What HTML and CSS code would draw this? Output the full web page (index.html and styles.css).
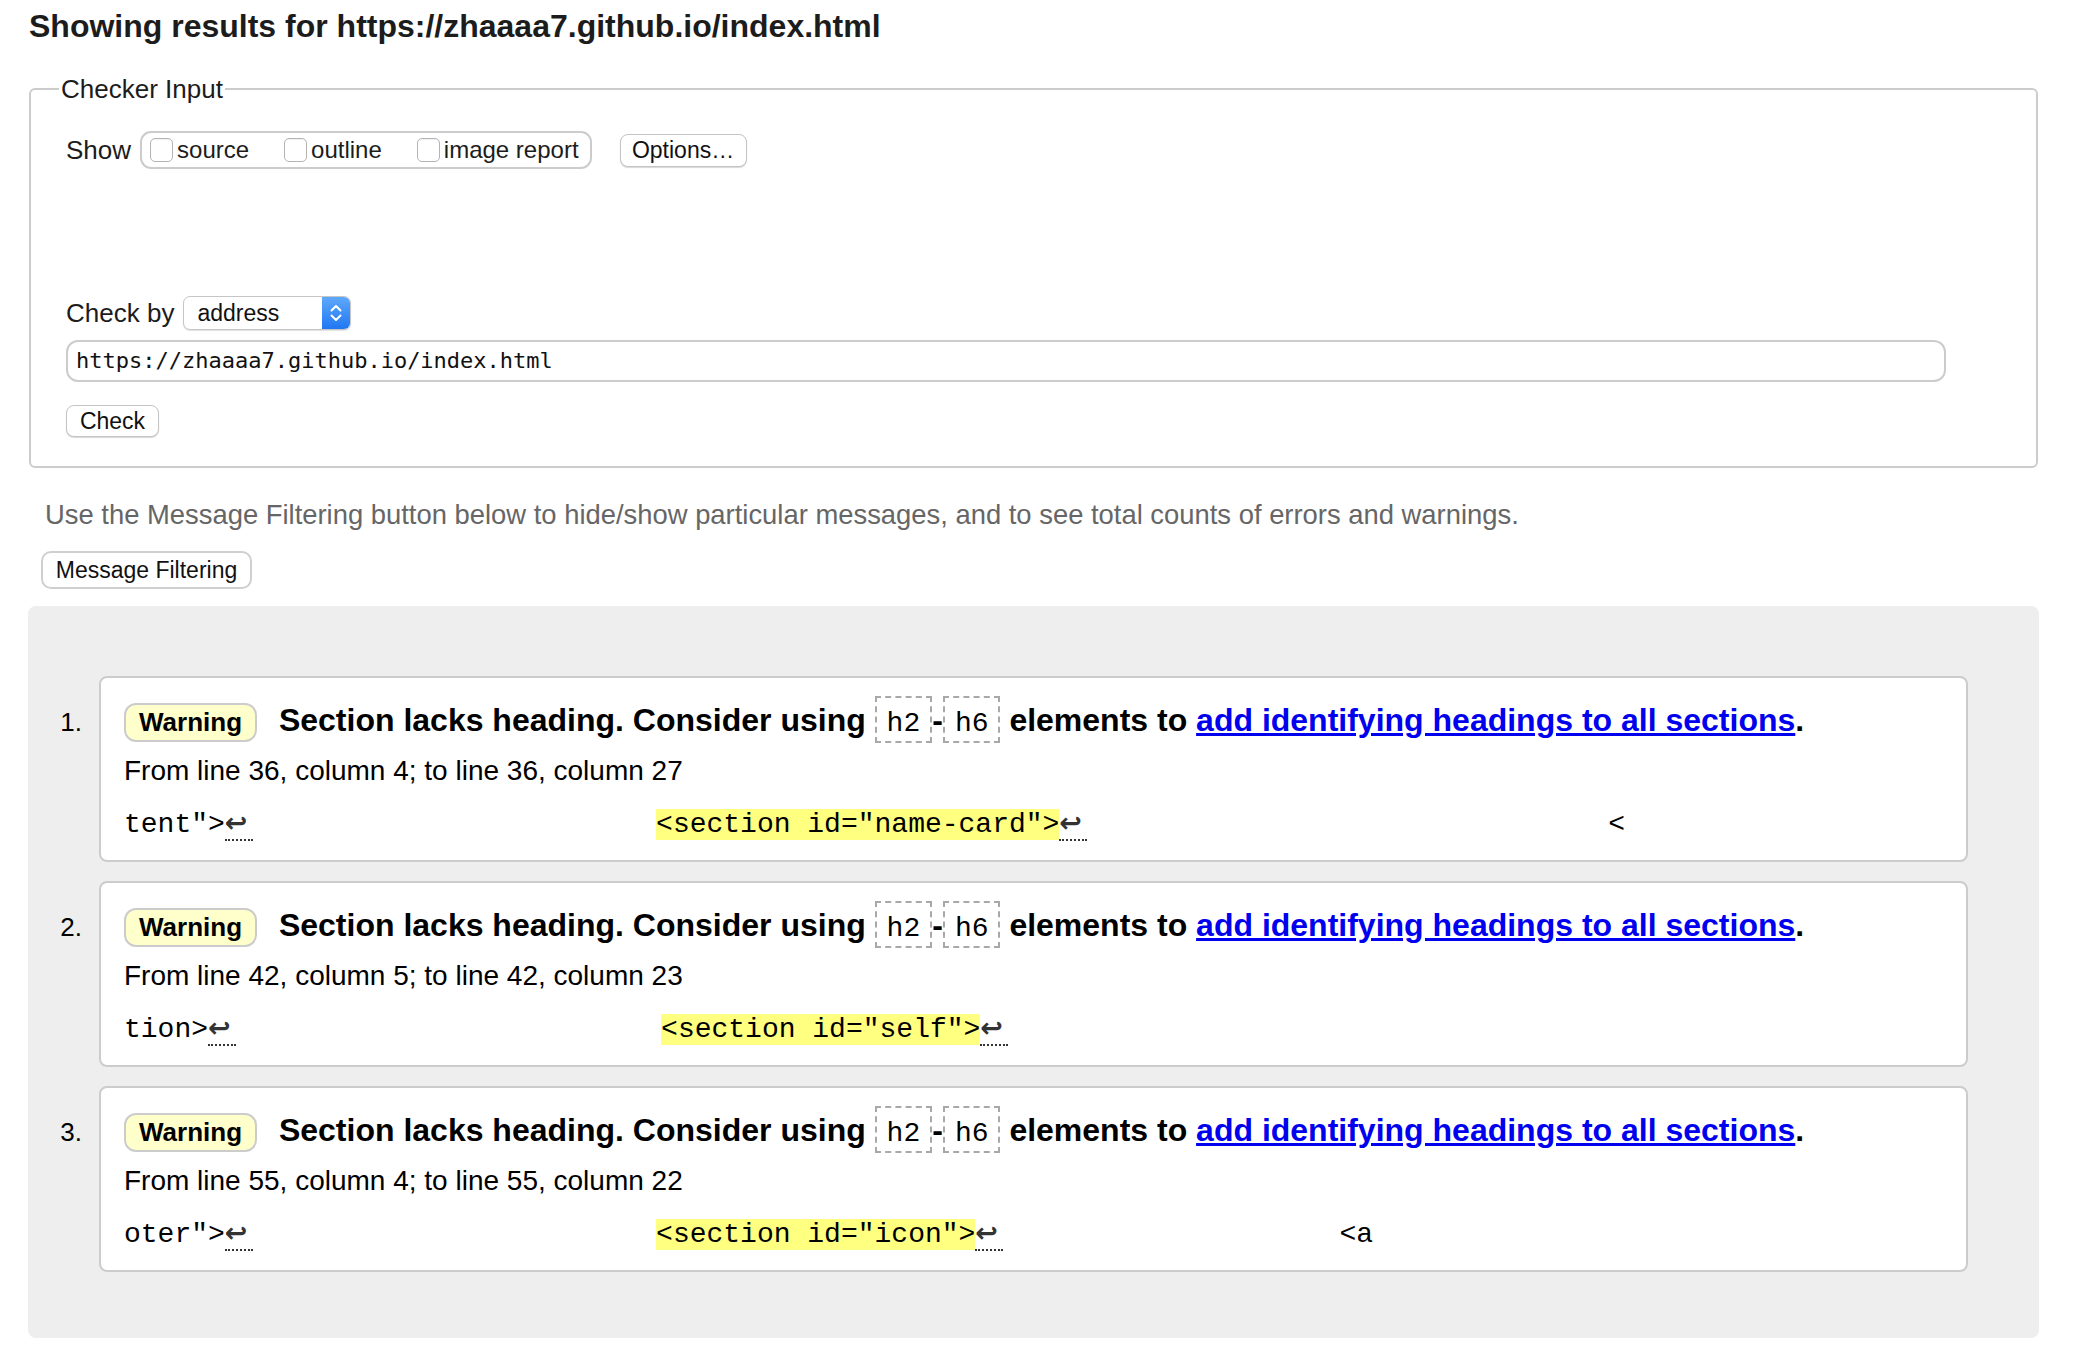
FILE: index.html
```html
<!DOCTYPE html>
<html lang="en">
<head>
<meta charset="utf-8">
<title>Showing results for https://zhaaaa7.github.io/index.html</title>
<link rel="stylesheet" href="styles.css">
</head>
<body>
<h2 class="title">Showing results for https://zhaaaa7.github.io/index.html</h2>

<fieldset class="checker">
  <legend>Checker Input</legend>
  <div class="show-row">
    <span class="label">Show</span>
    <div class="show-group">
      <label class="opt"><input type="checkbox"><span>source</span></label>
      <label class="opt"><input type="checkbox"><span>outline</span></label>
      <label class="opt"><input type="checkbox"><span>image report</span></label>
    </div>
    <button class="btn btn-options" type="button">Options…</button>
  </div>
  <div class="by-row">
    <span class="label">Check by</span>
    <div class="select">
      <span class="select-text">address</span>
      <span class="select-arrows"><svg width="28" height="34" viewBox="0 0 28 34"><path d="M9.5 14.5 L14 10 L18.5 14.5" fill="none" stroke="#fff" stroke-width="2" stroke-linecap="round" stroke-linejoin="round"/><path d="M9.5 19.5 L14 24 L18.5 19.5" fill="none" stroke="#fff" stroke-width="2" stroke-linecap="round" stroke-linejoin="round"/></svg></span>
    </div>
  </div>
  <div class="url">https://zhaaaa7.github.io/index.html</div>
  <button class="btn btn-check" type="button">Check</button>
</fieldset>

<p class="hint">Use the Message Filtering button below to hide/show particular messages, and to see total counts of errors and warnings.</p>
<button class="btn btn-filter" type="button">Message Filtering</button>

<ol class="results">
  <li class="msg">
    <span class="num">1.</span>
    <div class="box">
      <p class="head"><strong class="badge">Warning</strong> Section lacks heading. Consider using <code class="el">h2</code>-<code class="el">h6</code> elements to <a href="#">add identifying headings to all sections</a>.</p>
      <p class="loc">From line 36, column 4; to line 36, column 27</p>
      <p class="extract"><code>tent"&gt;<span class="lf">↩</span>                        <b>&lt;section id="name-card"&gt;</b><span class="lf">↩</span>                               &lt;</code></p>
    </div>
  </li>
  <li class="msg">
    <span class="num">2.</span>
    <div class="box">
      <p class="head"><strong class="badge">Warning</strong> Section lacks heading. Consider using <code class="el">h2</code>-<code class="el">h6</code> elements to <a href="#">add identifying headings to all sections</a>.</p>
      <p class="loc">From line 42, column 5; to line 42, column 23</p>
      <p class="extract"><code>tion&gt;<span class="lf">↩</span>                         <b class="shift">&lt;section id="self"&gt;</b><span class="lf">↩</span></code></p>
    </div>
  </li>
  <li class="msg">
    <span class="num">3.</span>
    <div class="box">
      <p class="head"><strong class="badge">Warning</strong> Section lacks heading. Consider using <code class="el">h2</code>-<code class="el">h6</code> elements to <a href="#">add identifying headings to all sections</a>.</p>
      <p class="loc">From line 55, column 4; to line 55, column 22</p>
      <p class="extract"><code>oter"&gt;<span class="lf">↩</span>                        <b>&lt;section id="icon"&gt;</b><span class="lf">↩</span>                    &lt;a</code></p>
    </div>
  </li>
</ol>
</body>
</html>
```

FILE: styles.css
```css
* { box-sizing: border-box; }

html, body {
  margin: 0;
  padding: 0;
  background: #fff;
}

body {
  font-family: "Liberation Sans", Arial, Helvetica, sans-serif;
  color: #000;
}

.title {
  margin: 8px 0 0 29px;
  font-size: 32px;
  line-height: 37px;
  font-weight: bold;
  color: #1c1c1c;
}

/* ---------- Checker input fieldset ---------- */
.checker {
  margin: 29px 40px 0 29px;
  padding: 0 35px 29px 35px;
  border: 2px solid #cccccc;
  border-radius: 6px;
  min-width: 0;
}

.checker legend {
  margin-left: -7px;
  padding: 0 2px;
  font-size: 26px;
  line-height: 30px;
  color: #1c1c1c;
}

.label {
  font-size: 26px;
  color: #1c1c1c;
  margin-right: 9px;
  white-space: nowrap;
}

.show-row {
  display: flex;
  align-items: center;
  height: 38px;
  margin-top: 27px;
}

.show-group {
  display: flex;
  align-items: center;
  flex: 0 0 auto;
  height: 38px;
  padding: 0 11px 0 8px;
  border: 2px solid #cccccc;
  border-radius: 11px;
}

.opt {
  display: flex;
  align-items: center;
  flex: 0 0 auto;
  white-space: nowrap;
  font-size: 24px;
  color: #1c1c1c;
  margin-right: 35px;
}

.opt:last-child { margin-right: 0; }

.opt input {
  -webkit-appearance: none;
  appearance: none;
  flex: 0 0 auto;
  width: 23px;
  height: 24px;
  margin: 0 4px 0 0;
  border: 1px solid #b4b4b4;
  border-radius: 5px;
  background: #fff;
  box-shadow: inset 0 1px 1px rgba(0, 0, 0, 0.06);
}

.btn {
  display: flex;
  align-items: center;
  justify-content: center;
  padding: 0;
  font-family: "Liberation Sans", Arial, Helvetica, sans-serif;
  font-size: 23px;
  color: #111;
  background: #fff;
  border: 1px solid #c4c4c4;
  border-radius: 8px;
  box-shadow: 0 1px 1px rgba(0, 0, 0, 0.16);
}

.btn-options {
  flex: 0 0 auto;
  margin-left: 28px;
  width: 127px;
  height: 33px;
}

.by-row {
  display: flex;
  align-items: center;
  height: 34px;
  margin-top: 127px;
}

.select {
  display: flex;
  width: 168px;
  height: 34px;
  border: 1px solid #c6c6c6;
  border-radius: 7px;
  overflow: hidden;
  box-shadow: 0 1px 1px rgba(0, 0, 0, 0.12);
  background: #fff;
}

.select-text {
  flex: 1;
  padding-left: 13px;
  font-size: 23px;
  line-height: 32px;
  color: #111;
}

.select-arrows {
  width: 28px;
  display: flex;
  align-items: center;
  justify-content: center;
  background: linear-gradient(#5fa8fb, #1f77f3);
}

.select-arrows svg { display: block; }

.url {
  margin: 10px 55px 0 0;
  height: 42px;
  padding-left: 8px;
  border: 2px solid #cccccc;
  border-radius: 12px;
  font-family: "DejaVu Sans Mono", "Liberation Mono", monospace;
  font-size: 22px;
  line-height: 38px;
  color: #111;
}

.btn-check {
  margin-top: 23px;
  width: 93px;
  height: 32px;
}

/* ---------- hint + filter ---------- */
.hint {
  margin: 31px 0 0 45px;
  font-size: 27.4px;
  line-height: 31px;
  color: #666;
}

.btn-filter {
  margin: 21px 0 0 41px;
  width: 211px;
  height: 38px;
  border: 2px solid #cfcfcf;
  border-radius: 10px;
  box-shadow: none;
}

/* ---------- results ---------- */
.results {
  list-style: none;
  margin: 17px 39px 0 28px;
  padding: 70px 71px 66px 0;
  background: #eeeeee;
  border-radius: 8px;
}

.msg {
  display: flex;
  align-items: baseline;
}

.msg + .msg { margin-top: 19px; }

.num {
  flex: 0 0 71px;
  padding-right: 17px;
  text-align: right;
  font-size: 26px;
}

.box {
  flex: 1;
  min-width: 0;
  background: #fff;
  border: 2px solid #cccccc;
  border-radius: 8px;
  padding: 17px 22px 10px 23px;
}

.head {
  margin: 0;
  font-size: 32px;
  line-height: 50px;
  font-weight: bold;
  white-space: nowrap;
}

.badge {
  display: inline-block;
  margin-right: 13px;
  padding: 2px 13px;
  font-size: 26px;
  line-height: 31px;
  background: #ffffcc;
  border: 2px solid #cccccc;
  border-radius: 12px;
}

.el {
  display: inline-block;
  padding: 9px 10px 1px;
  font-family: "Liberation Mono", "Courier New", monospace;
  font-weight: normal;
  font-size: 28px;
  line-height: 33px;
  border: 2px dashed #a8a8a8;
}

.head a {
  color: #0000ee;
  text-decoration: underline;
}

.loc {
  margin: 1px 0 0;
  font-size: 28px;
  line-height: 50px;
}

.extract {
  margin: 4px 0 0;
  font-family: "Liberation Mono", "Courier New", monospace;
  font-size: 28px;
  line-height: 50px;
  white-space: pre;
}

.extract code {
  font-family: inherit;
  font-size: 28px;
}

.extract b {
  font-weight: normal;
  background: #ffff80;
}

.extract b.shift { margin-left: 5px; }

.lf {
  display: inline-block;
  width: 28px;
  padding-bottom: 3px;
  font-family: "DejaVu Sans", sans-serif;
  font-weight: bold;
  font-size: 27px;
  line-height: 1;
  color: #333;
  border-bottom: 2px dotted #333;
}
```
